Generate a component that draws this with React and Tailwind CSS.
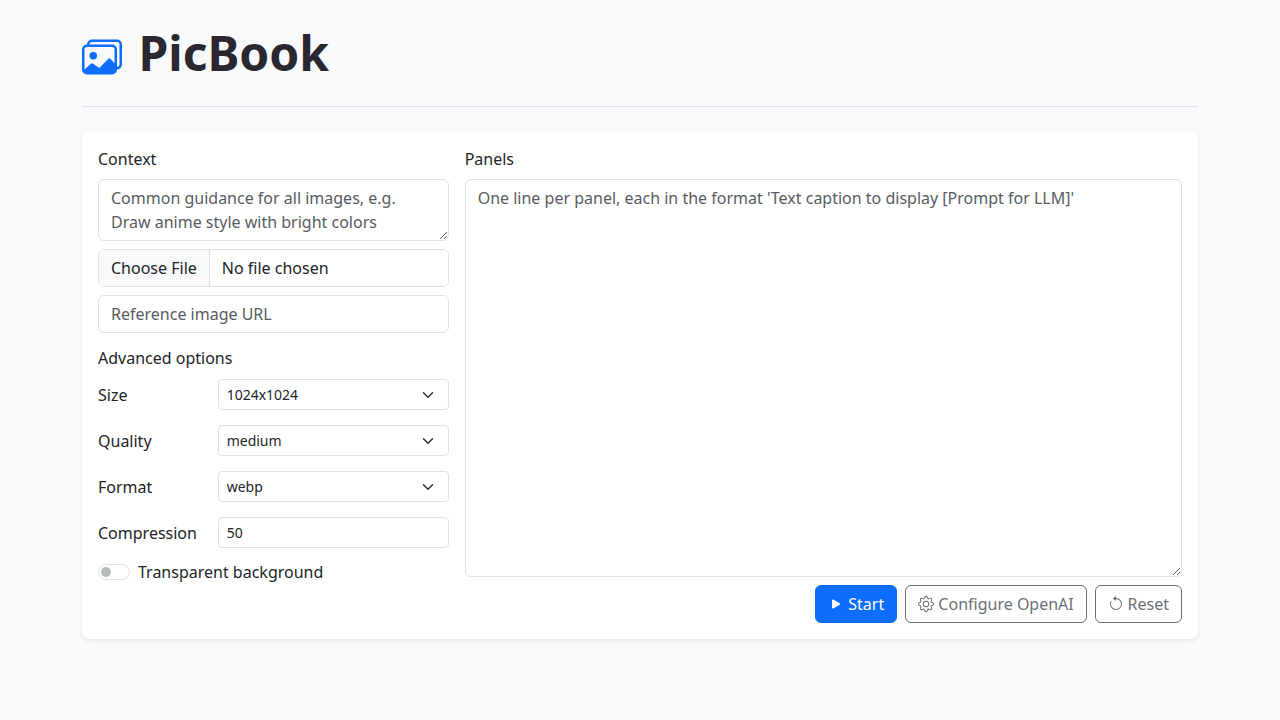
import { BsImages, BsPlayFill, BsGear, BsArrowCounterclockwise } from 'react-icons/bs';

const field =
  'block w-full rounded-md border border-[#dee2e6] bg-white px-3 text-base leading-6 text-[#212529] placeholder:text-[#595c5f]';
const smallField =
  'block h-[31px] w-[231px] appearance-none rounded border border-[#dee2e6] bg-white pl-2 text-sm leading-[21px] text-[#212529]';
const outlineButton =
  'h-[38px] rounded-md border border-[#756a6c] px-3 leading-6 text-[#6c7078] whitespace-nowrap';
const icon = 'inline-block size-4 align-[-2px]';

function Option({ label, children }) {
  return (
    <label className="flex h-[31px] items-center justify-between">
      <span className="mt-px">{label}</span>
      {children}
    </label>
  );
}

function Select({ value }) {
  return (
    <span className="relative block">
      <select className={smallField} defaultValue={value}>
        <option>{value}</option>
      </select>
      <svg className="pointer-events-none absolute right-[13px] top-[10px] h-3 w-4" viewBox="0 0 16 16" fill="none">
        <path d="m2 5 6 6 6-6" stroke="#343038" strokeWidth="2" strokeLinecap="round" strokeLinejoin="round" />
      </svg>
    </span>
  );
}

export default function App() {
  return (
    <div className="min-h-screen bg-[#f8f9fa] px-[82px] pt-6 font-['Noto_Sans',sans-serif] text-base text-[#212529]">
      <header className="flex h-[83px] border-b border-[#dee2e6]">
        <BsImages className="mt-[13px] size-10 shrink-0 text-[#0d6efd]" />
        <h1 className="ml-[16.5px] text-[48px] leading-[58px] font-bold text-[#2a2730]">PicBook</h1>
      </header>

      <main className="mt-6 flex h-[508px] gap-4 rounded-lg bg-white p-4 shadow-[0_2px_4px_rgba(0,0,0,0.075)]">
        <section className="w-[350.67px] shrink-0">
          <label className="mb-2 block" htmlFor="context">Context</label>
          <textarea
            id="context"
            className={`${field} h-[62px] resize-y overflow-hidden py-1.5`}
            placeholder="Common guidance for all images, e.g. Draw anime style with bright colors"
          />
          <input
            type="file"
            className="mt-2 block h-[38px] w-full overflow-hidden rounded-md border border-[#dee2e6] bg-white leading-6 file:mr-3 file:h-9 file:border-0 file:border-r file:border-solid file:border-[#dee2e6] file:bg-[#f8f9fa] file:px-3 file:text-base file:text-[#212529]"
          />
          <input type="text" className={`${field} mt-2 h-[38px] py-1.5`} placeholder="Reference image URL" />

          <h2 className="mt-[13px] mb-[9px] leading-6">Advanced options</h2>
          <div className="flex flex-col gap-[15px]">
            <Option label="Size"><Select value="1024x1024" /></Option>
            <Option label="Quality"><Select value="medium" /></Option>
            <Option label="Format"><Select value="webp" /></Option>
            <Option label="Compression">
              <input type="text" className={smallField} defaultValue="50" />
            </Option>
          </div>
          <label className="mt-3 flex items-center gap-2">
            <span className="flex h-4 w-8 items-center rounded-full border border-[#dee2e6] bg-white pl-[1.5px]">
              <span className="size-[10.5px] rounded-full bg-[#b6bcbc]" />
            </span>
            Transparent background
          </label>
        </section>

        <section className="min-w-0 flex-1">
          <label className="mb-2 block" htmlFor="panels">Panels</label>
          <textarea
            id="panels"
            className={`${field} h-[398px] resize-y py-1.5`}
            placeholder="One line per panel, each in the format 'Text caption to display [Prompt for LLM]'"
          />
          <div className="mt-2 flex justify-end gap-2">
            <button className="h-[38px] rounded-md border border-[#0d6efd] bg-[#0d6efd] px-3 leading-6 whitespace-nowrap text-white">
              <BsPlayFill className={icon} /> Start
            </button>
            <button className={outlineButton}>
              <BsGear className={icon} /> Configure OpenAI
            </button>
            <button className={outlineButton}>
              <BsArrowCounterclockwise className={`${icon} -mr-[0.4px]`} /> Reset
            </button>
          </div>
        </section>
      </main>
    </div>
  );
}
